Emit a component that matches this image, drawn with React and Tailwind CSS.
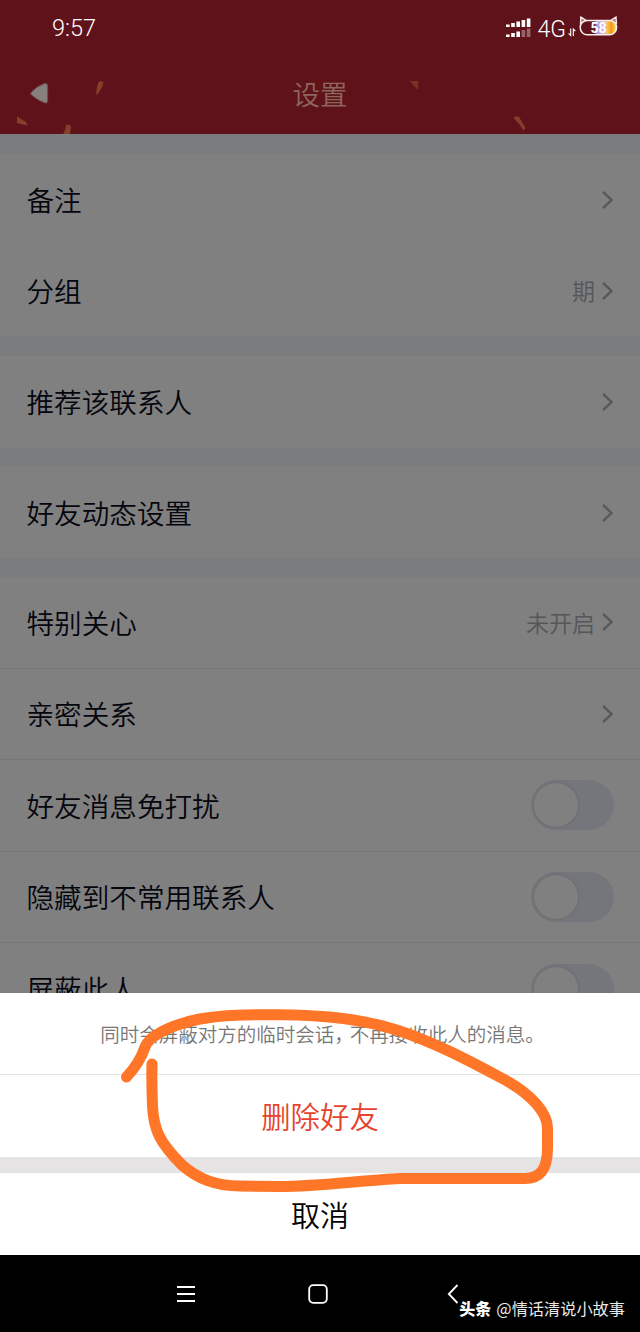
import React, { useState } from "react";

const groups = [
  {
    key: "remark",
    className: "h-[182px] mb-5",
    rows: [{ label: "备注" }, { label: "分组", value: "期" }],
  },
  { key: "recommend", className: "h-[92px] mb-[19px]", rows: [{ label: "推荐该联系人" }] },
  { key: "feed", className: "h-[91px] mb-[19px]", rows: [{ label: "好友动态设置" }] },
];

const privacyRows = [
  { label: "特别关心", value: "未开启" },
  { label: "亲密关系" },
  { label: "好友消息免打扰", toggle: true },
  { label: "隐藏到不常用联系人", toggle: true },
  { label: "屏蔽此人", toggle: true },
];

function Chevron() {
  return (
    <svg width="12" height="20" viewBox="0 0 12 20" fill="none" className="ml-[7px]">
      <path d="M1 1.8 L9.5 10 L1 18.2" stroke="#57585c" strokeWidth="2.4" />
    </svg>
  );
}

function Toggle({ on, onClick }) {
  return (
    <button
      onClick={onClick}
      aria-pressed={on}
      className={`flex items-center w-[83px] h-[50px] rounded-full bg-[#75767c] p-[3px] ${on ? "justify-end" : "justify-start"}`}
    >
      <span className="w-11 h-11 rounded-full bg-[#808080] shadow-[0_0_2px_1px_#6c6d72]" />
    </button>
  );
}

function Row({ label, value, toggle }) {
  const [on, setOn] = useState(false);
  return (
    <div className="flex flex-1 items-center justify-between pl-[26.5px] pr-[26px]">
      <span className="text-[27.6px] leading-none text-[#05060d]">{label}</span>
      {toggle ? (
        <Toggle on={on} onClick={() => setOn(!on)} />
      ) : (
        <span className="flex items-center text-[23px] leading-none text-[#55565a]">
          {value}
          <Chevron />
        </span>
      )}
    </div>
  );
}

function Signal() {
  const heights = [2.5, 4, 5.5, 7, 8.5];
  return (
    <svg width="26" height="20" viewBox="0 0 26 20" className="mr-[6px] mb-[3px]">
      {heights.map((h, i) => (
        <g key={h} fill="#fff">
          <rect x={0 + i * 5.2} y={9 - h} width="3.6" height={h} />
          <rect x={0 + i * 5.2} y={19 - h} width="3.6" height={h} opacity={i > 2 ? 0.35 : 1} />
        </g>
      ))}
    </svg>
  );
}

function Battery() {
  return (
    <div className="relative w-[39px] h-[20px] mb-[6px]">
      <svg width="39" height="20" viewBox="0 0 39 20" className="absolute inset-0">
        <defs>
          <linearGradient id="charge" x1="0" x2="1">
            <stop offset="0" stopColor="#5f121a" />
            <stop offset="0.38" stopColor="#5f121a" />
            <stop offset="0.46" stopColor="#a99bea" />
            <stop offset="0.66" stopColor="#dcb4dc" />
            <stop offset="0.74" stopColor="#f8c65c" />
            <stop offset="0.86" stopColor="#f59a10" />
            <stop offset="1" stopColor="#ffe27a" />
          </linearGradient>
        </defs>
        <path d="M1.5 7.5 L1.8 1 L8 4.8 Z M31 4.8 L37 1 L37.5 7.5 Z" fill="#b07a76" stroke="#ffe9e6" strokeWidth="1.3" />
        <rect x="1.2" y="4.4" width="36.4" height="14.4" rx="7.2" fill="url(#charge)" stroke="#fdeeea" strokeWidth="1.5" />
      </svg>
      <span className="absolute left-[11.5px] top-[4.5px] font-['Roboto',sans-serif] text-[14px] leading-[14px] font-bold text-white">
        58
      </span>
    </div>
  );
}

function Header() {
  return (
    <header className="relative h-[134px] bg-[#5f121a]">
      {/* confetti */}
      <svg width="640" height="134" viewBox="0 0 640 134" className="absolute inset-0" fill="#83412c">
        <path d="M98.5 82 Q101 80.5 103.5 82 Q102 90 96 95.5 Q96 88 98.5 82 Z" />
        <path d="M17 116.5 L26 122 L27.5 125.5 L17 123 Z" />
        <path d="M66 125 Q69 124 71 126 L70 134 L63 134 Q66 130 66 125 Z" />
        <path d="M409.5 81 L418.5 81 L418 90 Z" fill="#763326" />
        <path d="M513.5 118 Q516 115 519 117 L525.5 128 L523.5 130.5 Q519 123 513.5 118 Z" />
      </svg>
      <div className="relative flex h-[58px] items-center justify-between pl-[52px] pr-[22px] text-white">
        <span className="font-['Roboto',sans-serif] text-[23.5px] leading-none">9:57</span>
        <div className="flex items-center">
          <Signal />
          <span className="font-['Roboto',sans-serif] text-[23px] leading-none font-light">4G</span>
          <svg width="8" height="9" viewBox="0 0 8 9" className="mt-[7px] ml-[2px] mr-[3px]" fill="none" stroke="#fff" strokeWidth="1.1">
            <path d="M2.7 0.5 V7.5 L0.6 5.3 M5.3 8 V1 L7.4 3.2" />
          </svg>
          <Battery />
        </div>
      </div>
      <div className="relative flex h-[72px] items-center justify-center">
        <button aria-label="返回" className="absolute left-[29px] top-[24px]">
          <svg width="21" height="24" viewBox="0 0 21 24">
            <path d="M2.5 10 Q8 4 15.500 1.500 Q18.500 0.800 18.700 4 V18.500 Q18.700 21.500 16 21 Q8 18 2.500 13 Q0.800 11.500 2.500 10 Z" fill="#88807f" stroke="#6d4a4b" strokeWidth="1" />
          </svg>
        </button>
        <h1 className="text-[27.5px] leading-none text-[#8d665c]">设置</h1>
      </div>
    </header>
  );
}

function ActionSheet() {
  return (
    <section className="relative h-[262px] shrink-0 bg-white text-center">
      <p className="flex h-[82px] items-center justify-center border-b border-[#e3e3e3] pl-[5px] text-[19.5px] leading-none text-[#777]">
        <span>同时会屏蔽对方的临时会话</span>
        <span className="pr-[5.5px] [font-feature-settings:'halt']">，</span>
        <span>不再接收此人的消息。</span>
      </p>
      <button className="flex h-[82px] w-full items-center justify-center text-[29.4px] leading-none text-[#e5432d]">
        删除好友
      </button>
      <div className="h-4 bg-[#e5e3e3]" />
      <button className="flex h-[82px] w-full items-center justify-center text-[29px] leading-none text-black">
        取消
      </button>
      {/* hand-drawn marker loop */}
      <svg width="640" height="262" viewBox="0 993 640 262" fill="none" className="pointer-events-none absolute inset-0">
        <path
          d="M126.5 1077 C136 1067 141 1059 145 1047 C149 1036 170 1025 200 1019 C225 1014.5 250 1014.7 280 1014.7 C330 1015 365 1020 395 1029.5 C435 1042 475 1064 507 1081 C530 1094 547.5 1112 547.5 1128 L547.5 1148 C547.5 1168 541 1178.5 525 1178.5 L400 1178.5 C365 1180 320 1186.5 280 1186.5 L240 1186 C215 1185.5 198 1179 182 1165 C160 1143 153.5 1130 152.5 1106 C152 1090 151.5 1075 152 1064"
          stroke="#ff7628"
          strokeWidth="11"
          strokeLinecap="round"
          strokeLinejoin="round"
        />
      </svg>
    </section>
  );
}

function NavBar() {
  return (
    <nav className="relative h-[77px] shrink-0 bg-black">
      <div className="flex h-[77px] items-center pl-[177px]">
        <svg width="18" height="18" viewBox="0 0 18 18" stroke="#fff" strokeWidth="1.8">
          <path d="M0 2 H18 M0 9 H18 M0 16 H18" />
        </svg>
        <svg width="20" height="20" viewBox="0 0 20 20" fill="none" stroke="#fff" strokeWidth="1.8" className="ml-[113px]">
          <rect x="1.2" y="1.2" width="17.6" height="17.6" rx="4" />
        </svg>
        <svg width="12" height="20" viewBox="0 0 12 20" fill="none" stroke="#fff" strokeWidth="1.8" className="ml-[119px]">
          <path d="M10.5 1 L1.8 10 L10.5 19" />
        </svg>
      </div>
      <div className="absolute right-[15px] bottom-[16px] flex items-center text-[16.2px] leading-none font-normal text-[#e8e8e8]">
        <span className="mr-[5px] text-[16px] font-black text-white">头条</span>
        <span>@情话清说小故事</span>
      </div>
    </nav>
  );
}

export default function App() {
  return (
    <div className="flex h-[1332px] w-[640px] flex-col overflow-hidden bg-[#7a7c7e] font-['Noto_Sans_CJK_SC',sans-serif] font-[350]">
      <Header />
      <main className="h-[859px] shrink-0 overflow-hidden pt-5">
        {groups.map((group) => (
          <div key={group.key} className={`flex flex-col bg-[#808080] ${group.className}`}>
            {group.rows.map((row) => (
              <Row key={row.label} {...row} />
            ))}
          </div>
        ))}
        <div className="flex h-[457px] flex-col divide-y divide-[#767676] bg-[#808080]">
          {privacyRows.map((row) => (
            <Row key={row.label} {...row} />
          ))}
        </div>
      </main>
      <ActionSheet />
      <NavBar />
    </div>
  );
}
